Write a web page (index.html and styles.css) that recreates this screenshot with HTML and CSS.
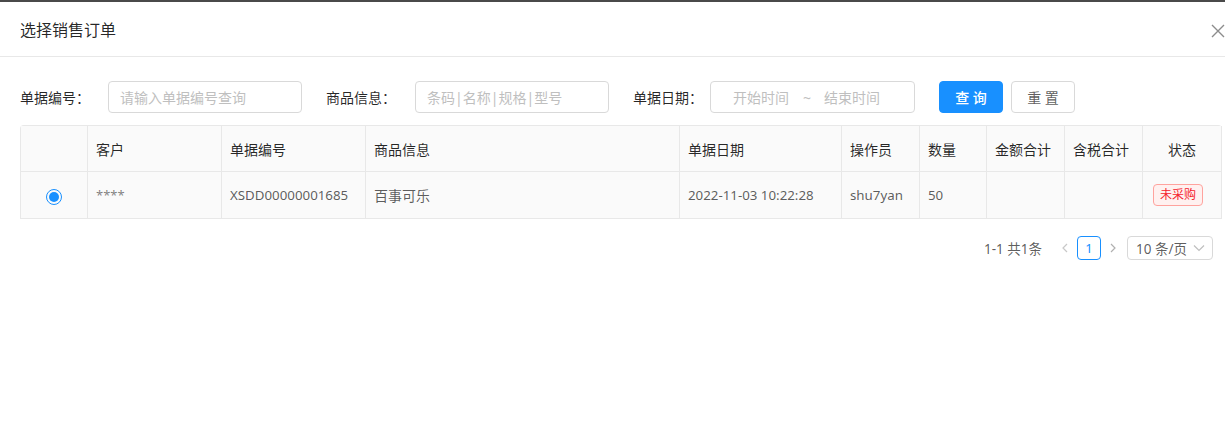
FILE: index.html
```html
<!DOCTYPE html>
<html>
<head>
<meta charset="utf-8">
<link rel="stylesheet" href="styles.css">
</head>
<body>
<div class="topbar"></div>
<div class="modal">
  <div class="modal-header">
    <span class="modal-title">选择销售订单</span>
    <span class="close">
      <svg width="14" height="14" viewBox="0 0 14 14"><path d="M1 1 L13 13 M13 1 L1 13" stroke="#8c8c8c" stroke-width="1.4" fill="none"/></svg>
    </span>
  </div>
  <div class="modal-body">
    <div class="filters">
      <div class="field">
        <label class="label l1">单据编号：</label>
        <div class="input w1"><span class="ph">请输入单据编号查询</span></div>
      </div>
      <div class="field">
        <label class="label l2">商品信息：</label>
        <div class="input w2"><span class="ph">条码|名称|规格|型号</span></div>
      </div>
      <div class="field">
        <label class="label l3">单据日期：</label>
        <div class="input range"><span class="ph">开始时间</span><span class="tilde">~</span><span class="ph">结束时间</span></div>
      </div>
      <div class="btns">
        <button class="btn primary">查 询</button>
        <button class="btn">重 置</button>
      </div>
    </div>
    <table class="table">
      <colgroup>
        <col style="width:67px"><col style="width:134px"><col style="width:144px"><col style="width:314px"><col style="width:162px"><col style="width:78px"><col style="width:67px"><col style="width:78px"><col style="width:78px"><col style="width:79px">
      </colgroup>
      <thead>
        <tr>
          <th></th><th>客户</th><th>单据编号</th><th>商品信息</th><th>单据日期</th><th>操作员</th><th>数量</th><th>金额合计</th><th>含税合计</th><th class="center">状态</th>
        </tr>
      </thead>
      <tbody>
        <tr>
          <td class="center"><span class="radio"><span class="dot"></span></span></td>
          <td class="stars">****</td><td class="latin">XSDD00000001685</td><td>百事可乐</td><td class="latin">2022-11-03 10:22:28</td><td class="latin">shu7yan</td><td class="latin">50</td><td></td><td></td><td class="center"><span class="tag">未采购</span></td>
        </tr>
      </tbody>
    </table>
    <div class="pager">
      <span class="total">1-1 共1条</span>
      <span class="arrow">
        <svg width="8" height="10" viewBox="0 0 8 10"><path d="M6 1 L2 5 L6 9" stroke="#c8c8c8" stroke-width="1.2" fill="none"/></svg>
      </span>
      <span class="page">1</span>
      <span class="arrow">
        <svg width="8" height="10" viewBox="0 0 8 10"><path d="M2 1 L6 5 L2 9" stroke="#b0b0b0" stroke-width="1.2" fill="none"/></svg>
      </span>
      <span class="size">10 条/页
        <svg width="12" height="8" viewBox="0 0 12 8"><path d="M1 1.5 L6 6.5 L11 1.5" stroke="#bfbfbf" stroke-width="1.2" fill="none"/></svg>
      </span>
    </div>
  </div>
</div>
</body>
</html>
```

FILE: styles.css
```css
* { box-sizing: border-box; }
html, body { margin: 0; padding: 0; background: #fff; }
body {
  font-family: "Noto Sans", "Noto Sans CJK SC", sans-serif;
  font-size: 14px;
  color: rgba(0,0,0,.65);
  width: 1225px;
  height: 439px;
  overflow: hidden;
}
.topbar { height: 2px; background: #4a4a4a; }
.modal-header {
  height: 55px;
  border-bottom: 1px solid #e8e8e8;
  display: flex;
  align-items: center;
  justify-content: space-between;
  padding: 0 0 0 20px;
}
.modal-title { font-size: 16px; color: rgba(0,0,0,.85); line-height: 22px; padding-top: 1px; }
.close { width: 16px; display: flex; align-items: center; margin-right: -2px; padding-top: 3px; }
.modal-body { padding: 24px 4px 0 20px; }
.filters { display: flex; align-items: center; height: 32px; }
.field { display: flex; align-items: center; margin-right: 24px; }
.label { color: rgba(0,0,0,.85); white-space: nowrap; }
.l1 { width: 88px; }
.l2 { width: 89px; }
.l3 { width: 77px; }
.input {
  height: 32px;
  border: 1px solid #d9d9d9;
  border-radius: 4px;
  display: flex;
  align-items: center;
  padding: 0 11px;
}
.w1 { width: 194px; }
.w2 { width: 194px; }
.range { width: 205px; padding: 0 0 0 22px; }
.ph { color: #bfbfbf; white-space: nowrap; }
.tilde { color: #bfbfbf; margin: 0 13px 0 14px; }
.btns { display: flex; gap: 8px; }
.btn {
  height: 32px;
  width: 64px;
  border: 1px solid #d9d9d9;
  border-radius: 4px;
  background: #fff;
  font-family: inherit;
  font-size: 14px;
  color: rgba(0,0,0,.65);
  padding: 0;
}
.primary { background: #1890ff; border-color: #1890ff; color: #fff; font-weight: 500; }
.table {
  margin-top: 12px;
  width: 1202px;
  border-collapse: separate;
  border-spacing: 0;
  table-layout: fixed;
  border: 1px solid #e8e8e8;
  border-right: 0;
  border-bottom: 0;
  border-radius: 4px 4px 0 0;
}
.table th, .table td {
  border-right: 1px solid #e8e8e8;
  border-bottom: 1px solid #e8e8e8;
  text-align: left;
  padding: 0 8px;
  white-space: nowrap;
  overflow: hidden;
}
.table th {
  height: 46px;
  background: #fafafa;
  font-weight: 400;
  color: rgba(0,0,0,.85);
}
.table td { height: 47px; background: #fafafa; }
.table td.latin { font-size: 13.3px; }
.table .center { text-align: center; }
.stars { font-size: 13px; color: rgba(0,0,0,.5); }
.radio {
  display: inline-flex;
  width: 16px; height: 16px;
  border: 1px solid #1890ff;
  border-radius: 50%;
  align-items: center;
  justify-content: center;
  vertical-align: middle;
  margin-top: 3px;
}
.dot { width: 10px; height: 10px; background: #1890ff; border-radius: 50%; }
.tag {
  display: inline-block;
  height: 22px;
  line-height: 20px;
  padding: 0 6px;
  margin-right: 8px;
  border: 1px solid #ffa39e;
  background: #fff1f0;
  color: #f5222d;
  border-radius: 4px;
  font-size: 12px;
}
.pager {
  margin-top: 17px;
  display: flex;
  align-items: center;
  justify-content: flex-end;
  padding-right: 8px;
  height: 24px;
}
.total { margin-right: 17px; font-size: 13.5px; }
.arrow { width: 12px; height: 24px; display: flex; align-items: center; justify-content: center; }
.page {
  width: 24px; height: 24px;
  border: 1px solid #1890ff;
  border-radius: 4px;
  color: #1890ff;
  display: flex; align-items: center; justify-content: center;
  font-size: 13px;
  margin: 0 6px;
}
.size {
  margin-left: 8px;
  height: 24px;
  width: 86px;
  border: 1px solid #d9d9d9;
  border-radius: 4px;
  display: flex;
  align-items: center;
  justify-content: space-between;
  padding: 0 7px 0 8px;
  font-size: 13.5px;
}
```
